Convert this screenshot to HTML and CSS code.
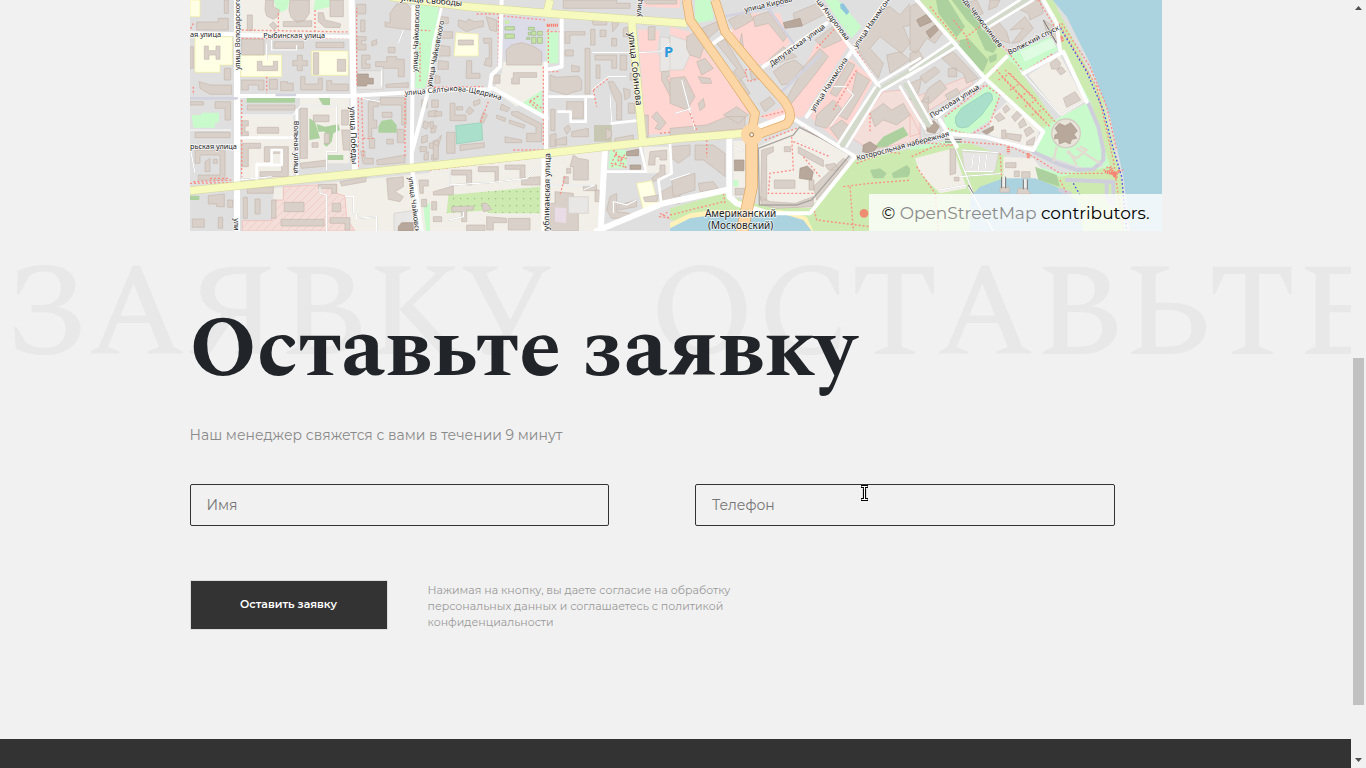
FILE: index.html
```html
<!DOCTYPE html>
<html lang="ru">
<head>
<meta charset="utf-8">
<meta name="viewport" content="width=device-width, initial-scale=1">
<title>Оставьте заявку</title>
<link rel="stylesheet" href="styles.css">
</head>
<body class="page">
<div class="page__content">
  <section class="map container" aria-label="Карта">
    <svg class="map__canvas" viewBox="0 0 2916 693" preserveAspectRatio="xMidYMid slice" role="img" aria-label="Карта района">
      <defs>
        <pattern id="hatch" width="24" height="24" patternUnits="userSpaceOnUse"><path d="M0 24L24 0" stroke="#efc6c0" stroke-width="2"/></pattern>
        <pattern id="dots" width="21" height="21" patternUnits="userSpaceOnUse"><circle cx="8" cy="8" r="2" fill="#8db87c"/></pattern>
        <path id="saltykova" d="M645 286L790 273Q860 274 960 310"/>
      </defs>
      <rect class="m-res" width="2916" height="693"/>

      <!-- west: land -->
      <g>
        <path class="m-land" d="M150 0H478V100H150zM155 345H310V520H155zM155 415H310V535H155zM330 293H478V490H330zM250 565L750 515V693H250z"/>
        <path class="m-school" d="M0 0H30V50H0zM15 110H127V195H90V217H15zM152 165H275V230H152zM365 153H474V226H365z"/>
        <path class="m-park" d="M250 0H300L290 30L265 38zM375 0H420V20L370 32zM690 15H745V100L705 265H675zM700 620L725 605V693H708zM5 345H35V338H87V368H75V383H10z"/>
        <path class="m-wood" d="M170 293H315V308H170zM385 293H420V318H400zM358 355L375 365L390 415L358 420zM380 372L405 380L445 372L450 390L430 400L425 425L410 440L400 432L415 420L405 395H385zM412 465H460V480H412zM575 362L605 358L620 375V398H565V380zM280 562H345V590H280zM0 587H28V600H0z"/>
        <path class="m-hosp" d="M280 560L440 552V580L465 588L470 655L495 693H157V662H245L250 600H280z"/>
        <path fill="url(#hatch)" d="M280 560L440 552V580L465 588L470 655L495 693H157V662H245L250 600H280z"/>
        <path class="m-ind" d="M502 212H580V268H502zM612 640L680 630L690 693H612z"/>
        <path class="m-b" d="M20 66H85V55H115V90H20zM103 0H115V40H103zM172 45H187V92H172zM238 75L250 65L263 80L252 90zM227 0H250V20L268 30L265 48L250 58L230 48L225 30zM300 0H358V40L345 60L322 68L303 52L297 30zM280 65L365 62V80H280zM385 38H400L405 60L440 68L452 72L450 83L405 82L385 65zM420 0H460V50H420zM155 118H222V165H155zM252 125H340V145H252zM378 127H462V143H378zM43 138H55V152H78V138H90V178H78V165H57V178H43zM0 140H10V205H0zM202 184H216V198H250V184H263V212H202zM322 166H337V182H352V197H337V212H322V197H308V182H322zM370 158H386V223H370zM442 178H467V214H442zM103 205H122V240H103zM28 245L60 255H125V283H60L30 265zM155 240H222V270H205V255H175V270H155zM238 238H262V268H238zM272 245H292V250H310V272H272zM332 230H345V252H385V235H397V270H332zM410 242H425V252H475V272H410zM500 13H527V42H500zM512 60H525V95H512zM500 110H528V122H515V133H528V150H500zM515 165H540V178H528V192H540V205H515zM545 125L560 118V133L545 138zM557 185H590V170H620V178H643V230H625V205H580V200H557zM595 142H615V158H595zM585 65L600 70V40L620 12L650 10L665 30V90L585 80zM588 253L655 248V262H588zM0 305H40V315H0zM75 305H122V360H105V325H75zM172 315H315V330H172zM155 362H175V378H165V395H175V408H155zM202 382H266V400H202zM15 397H120V413H15zM330 325H352V475H330zM370 345H417V365H370zM455 330H475V375H455zM455 390H480V450H460zM403 400H418V430H403zM366 428H384V442H366zM535 305H565V320H550V360H560V385H545V410H535zM570 293H648V375H635V315H570zM577 337H606V352H577zM622 388H642V428H622zM538 415H554V445H538zM590 418H610V432H590zM155 430H212V445H175V500H155zM223 440H295V530H210V515H275V460H240V485H223zM330 490L410 480V498L335 505zM512 453H525V475H550V492H520zM560 480L645 465V488L562 495zM15 450H105V540H25V525H90V465H30V490H15zM45 485L60 475V515H45zM70 478H82V490H70zM695 300H712V322H695zM725 300H745V322H725zM715 335L740 330V350H715zM702 363L718 368L710 388L698 382zM725 375L740 378L735 398H722zM695 410L712 405V425L695 430zM690 440H710V455H690zM718 430L740 425V445H718zM702 462L715 455V480H702zM725 465H740V480H725zM55 587L103 582V620H80V612H55zM113 600H128V622H113zM172 565L250 560V580H172zM160 592H172V655H160zM195 597H210V642H195zM245 600H258V655H245zM283 607H342V635H283zM427 610H452V635H427zM273 658H402V678H273zM420 653H480V690H465V670H420zM385 553H440V580H425V565H385zM450 545L528 530V545L455 558zM590 535L640 530V560L615 575L640 590L630 605L595 598zM687 540H715V558H700V580H690zM735 530H750V580H722V568H735zM7 657H43V682H7zM85 652H98V685H85zM695 598H710V620H695z"/>
        <path class="m-bd" d="M502 222H535V235H550V252H530V258H502zM635 668H670V693H625V680z"/>
        <path class="m-minor" d="M245 120V150H320V135M230 130V180M150 345H310L330 318H440V455H410V510M390 560V580L410 585V693M500 640V655L560 650V693M465 590H490V640M515 295L570 305M575 210V260M625 130L640 90M0 390H125M150 540L245 530M0 440L15 520"/>
        <path class="m-foot" d="M155 90L480 96M155 115H475M10 70L0 90M230 230V280M265 40V95M375 30V95M515 295L520 470M520 415H555M155 300V530M10 545L130 540M0 550L125 548M505 290V500M645 270V470M500 255V25M10 260V285M680 90L720 92M690 130V250M60 535H120M160 548L640 500"/>
      </g>

      <!-- centre west: land -->
      <g transform="translate(720)">
        <path class="m-park" d="M0 10H25L15 130L0 200zM350 95H385V190H350zM268 270L335 268V340L262 310z"/>
        <path class="m-inst" d="M220 50H345V190H232L220 160z"/>
        <path class="m-land" d="M220 185H345V265L260 320L190 270L215 220zM0 505L335 465V693H0zM350 460L515 450V693H350zM640 440H725V520H650z"/>
        <path class="m-green" d="M55 585L330 560V640H185L155 632L50 640zM224 60H238V72H224z"/>
        <path fill="url(#dots)" d="M55 585L330 560V640H185L155 632L50 640z"/>
        <path class="m-school" d="M78 98L145 102V168H72zM620 550L665 542L685 615L640 630z"/>
        <path class="m-retail" d="M625 88L690 92L680 160L750 215V395L645 405zM640 0H750V25L640 20z"/>
        <path class="m-ind" d="M690 110L750 120V215L690 215z"/>
        <path class="m-pitch" d="M77 377L155 368L158 420L80 432z"/>
        <path class="m-olive" d="M492 375H545V425H492z"/>
        <path class="m-park" d="M540 450H590V505H535z"/>
        <path class="m-lawn" d="M225 80H253V90H225zM225 102H253V115H225zM295 82H313V90H295zM295 97H302V105H295zM305 94H318V106H305zM323 94H337V106H323zM290 112H300V118H290zM305 112H318V130H305zM322 112H337V130H322z"/>
        <path class="m-b" d="M30 50L55 52V70L30 72zM45 95H68V115H30L35 92zM25 135L60 140V168H22zM25 182L55 185V208H25zM15 225L30 230V250H15zM85 60L110 65L115 57L135 65L160 62V80L135 85L110 95L85 80zM168 50L200 60V95L180 90zM160 115H185V200L162 195L168 175H178V130H162zM85 120H130V135H85zM110 182H125V220H150V235H108zM228 150L245 135L275 128L310 138L335 155V195H230zM250 218H320V232H268V252H245V235H250zM60 310H75V345H108V362H60zM15 335H35V348H15zM0 365H10V385H0zM80 320H98V330H80zM118 320L132 332L118 345L108 335zM130 305L150 298V310L132 318zM160 335L172 345L160 370L150 362zM215 312L240 325L232 335L210 328zM200 345L228 355L225 365L200 355zM238 360L285 375L282 385L238 370zM245 335L265 335L335 372V425H290V400H318V380L245 345zM225 410L275 420V428H225zM10 430L35 405L25 440zM50 397H75V460H50zM90 435L163 428V442L90 452zM10 422H25V478L10 475zM195 225H210V250H180zM360 225L380 232L445 228L455 240V270L425 278L410 285L360 270zM425 195L448 200V215H425zM465 145H480V282H465zM405 95H465V105H420V130H405zM405 150H430V168H405zM485 60H530V75H490zM482 88H495V135H482zM510 90H528V110H510zM545 55H565V75L548 95zM545 115H560V138H545zM495 165H560V205H545V180H495zM498 195H510V235H498zM535 245H550L575 285V360H560V310L540 265zM580 85L595 80V110H580zM410 305H460V355H425V335H410zM362 328H375V392H362zM402 385L415 375L422 388L410 403zM360 405L378 400V440H360zM375 420L410 410V435H375zM425 395L475 385V410H425zM528 385L545 395V410L528 420zM555 415L610 405V425H555zM635 345H655V410H640zM570 165H590V210H570zM600 220H620V240H600zM580 265L600 270V290L585 300zM595 310H615V340H595zM665 350L680 335L708 368L690 390L675 385L685 370zM695 215L740 210V230H710L750 320V345L695 240zM655 80H675V120H655zM720 110H750V135H720zM10 575L70 558V585H10zM65 510H125V555H110V525H65zM145 500H205V545H195V515H145zM225 495H285V535H270V508H225zM275 535L330 530V555H275zM5 605H20V630H5zM65 620L130 618V630H110V665H95V635H65zM155 610H170L185 628L160 635zM170 650L230 655V668H190V690H170zM235 655H300V690H235zM110 675H165V693H110zM430 465L445 475L475 480V540H430V500H420zM410 505H422V520H410zM400 530H415V552H400zM375 575L430 580V630L445 640V693H360V610H375zM495 570H508V605H495zM460 555H500V572H460zM590 455L625 448V465H590zM660 455L710 450V480H690V470H675V495H655zM540 590L560 580V635L600 640V655H545L530 630zM565 615L620 600V620L565 630zM640 592L685 585L680 605H645zM695 575L750 545V610L700 615zM665 535L690 515V495H705V530L670 545zM10 650H35V665H10zM345 560L360 550V600L345 640zM400 0V25H600V10H560V0zM640 0L740 0V12H650z"/>
        <path class="m-bd" d="M590 455L625 448V467H590zM600 495H632V508H600z"/>
        <path class="m-pink" d="M375 622L410 625L408 670L375 665z"/>
        <path class="m-ind" d="M415 590H475V640H415z"/>
        <path class="m-minor" d="M60 510V555L180 548L290 535L330 495M55 660L100 650V635M485 158H620L690 155L720 130M590 230H535L485 270M540 285L545 365M460 570L495 555H340M550 640V605L590 615L620 600M620 220V200"/>
        <path class="m-foot" d="M0 262L160 260M140 42H210M205 50V215M220 48L345 60M355 75V190M350 95H400M340 200V440M250 450H340M490 270L535 235M490 270L500 320M175 305L150 370M300 305L330 285M298 305L325 330M300 300L335 325M405 530L390 585M0 510L340 470M690 400L740 395M550 450L590 505M545 500L590 460M560 455L545 490L580 500L565 480L590 475L555 465M355 215H385M530 685L740 600M690 640L720 655L690 650L715 635"/>
        <path class="m-red" d="M350 76H385"/>
      </g>

      <!-- centre east: land -->
      <g transform="translate(1440)">
        <path class="m-retail" d="M0 80L60 95L240 330L210 395L0 410zM180 90L250 40H330L360 130L290 195L240 190zM270 350L340 320L440 130L500 95L540 130L400 350L300 360zM420 350L540 175L610 240L510 430z"/>
        <path class="m-land" d="M190 422H225V590H190zM265 440L385 380L540 465L425 625H265z"/>
        <path class="m-hosp" d="M540 410L640 275L700 270L750 350V420L600 450z"/>
        <path class="m-ind" d="M0 105L60 125V165L40 210H0z"/>
        <path class="m-park" d="M75 0H120L130 60L75 70zM465 0H505L575 80L545 115L500 55zM190 540H205V560H190z"/>
        <path class="m-green" d="M0 625L160 580L240 610L420 625L555 480L750 440V693H420L0 660z"/>
        <path class="m-wood" d="M600 510L630 505L650 520L640 535H610zM665 520L710 495L725 510L715 530L670 535zM640 410L700 380L715 405L650 440L610 445z"/>
        <path class="m-beach" d="M0 668L60 640L130 630H330L410 650L430 693H0z"/>
        <path class="m-water" d="M0 685L60 655L130 645H250L350 645L400 660L425 693H0z"/>
        <path class="m-b" d="M50 110L80 95L105 130L90 175L60 165L50 145zM95 85L140 65L150 85L115 115zM140 130L165 118L230 225L210 240L190 215L200 205zM0 235L45 230L75 290L50 330L0 310zM80 185L105 175L130 205L95 225zM85 230L120 235L125 250H95zM85 310L100 295L105 320L90 332zM190 250L215 240L240 280L225 290zM0 385L110 375L170 350L225 350V385L0 408zM160 345L200 320L235 345L205 370zM240 215L265 210L280 230L245 240zM175 60L235 30L250 60L195 90zM215 100L225 180L205 150zM250 50L295 35L350 110L340 125L295 70L255 80zM310 215L345 190L375 180L400 200L360 250L335 255zM340 140L380 170L320 190L290 185zM370 40L455 5L480 35L400 75L375 70zM270 310L300 290L315 310L285 335zM405 195L450 145L475 170L430 230L365 310L345 305zM435 120L495 75L515 120L460 145zM535 185L555 195L530 240L500 290L480 280zM560 215L600 240L560 310L530 360L505 345L545 285zM440 345L490 300L515 325L470 385L435 375zM480 385L515 360L540 380L510 425zM560 130L600 90L625 30L660 20L690 45L720 10L750 30V70L700 80L720 130L695 160L630 110L600 145L640 190L625 235L570 160zM650 165L690 155L720 180L660 220zM600 340L640 310L665 330L700 310L720 345L680 375L640 360L615 380zM0 440L60 435V465L25 490L0 470zM75 435H130L165 460V530L140 510L100 480H75zM5 540L75 520V570L10 590zM85 550L130 545L145 565L90 575zM275 450L310 440V455L290 465V600H272zM313 540H375V565H313zM385 440L460 480V500L385 460zM343 440H362V455H343zM270 590L300 605L375 610L430 590V620L320 625L275 615zM430 560L520 475L535 485L440 600zM465 495L495 490L505 510H475zM195 565H225V585H195zM417 540H432V570H417z"/>
        <path class="m-bd" d="M340 68L390 55L397 78L345 85zM193 480H222V512H193zM390 505L412 498L430 515L425 540L388 535zM580 435L600 425L622 440L605 462L578 455zM740 60L750 55V80H740z"/>
        <path class="m-pool" d="M510 12L520 10L538 35L530 45L512 25z"/>
        <path class="m-fort" d="M265 445L370 405L388 382L455 415L540 465L425 600L380 615H268z"/>
        <path class="m-minor" d="M35 240L75 390M15 340L65 325M380 425L480 470M490 260H525L550 285L480 380M0 540L60 520M190 440L220 455"/>
        <path class="m-foot" d="M225 210L265 205L270 235L235 245L225 215M365 410L370 510L300 520L295 580H430M370 425L480 470M400 470L450 530M160 580L165 610M0 645L160 605M440 145L500 80M490 330L560 210M555 145L620 245M275 350L340 335M60 340L80 390M400 380L500 440M520 560L600 550L730 540L730 470M540 560L550 693M430 620L440 660L600 680M560 490L650 455L690 460M600 340V400M480 60L540 130M110 420V470M285 420L380 385"/>
      </g>

      <!-- east: land -->
      <g transform="translate(2160)">
        <path class="m-park" d="M0 440L130 420L450 520L580 500L540 310L450 150L400 0H430L620 520L650 693H0z"/>
        <path class="m-green" d="M30 0H150L300 170L440 370L400 385L220 235zM400 0H430L500 140L580 300L640 560V693H0V450L180 430L450 530L600 500L545 310L450 145z"/>
        <path class="m-park" d="M285 170L420 110L445 150L340 215zM100 350L180 300L240 250L270 290L240 360L180 400L110 395zM400 385L450 350L530 310L580 430L575 490L540 510L375 455z"/>
        <path class="m-pale" d="M330 155L425 115L438 140L345 185z"/>
        <path class="m-land" d="M355 225L450 165L525 305L455 350zM240 355L290 305L390 385L370 445L240 405zM15 475L130 445L170 565L90 580L30 520zM280 470L370 475L420 540L280 560z"/>
        <path class="m-res" d="M0 0L130 120L0 215zM130 0H400L440 90L290 155zM0 255L140 150L215 235L60 345z"/>
        <path class="m-hosp" d="M20 290L170 230L190 250L60 330zM0 340L30 400L0 410z"/>
        <path class="m-ind" d="M155 455L265 460L255 515H165z"/>
        <path class="m-wood" d="M78 0H115L165 80L140 112L85 40zM125 0H155L225 70L210 100L170 60zM150 120L175 115L235 180L220 215L190 205L145 145zM200 95L225 90L262 140L250 160L225 150zM235 170L260 160V180L240 190zM375 500L440 525L450 560L385 540z"/>
        <path class="m-b" d="M0 20L20 10L100 95L75 130L50 115L20 160L0 150zM0 160L25 150L40 175L0 200zM165 10L200 0L220 40L200 50zM240 0H270L260 20L235 30zM235 85L265 65L290 95L300 130L270 120zM300 90L345 50L370 85L330 125L305 130L340 85zM320 25L365 0H390L400 40L360 60L355 40zM400 60L450 90L440 125L410 100zM95 175L130 155L205 235L170 250L160 220L130 205zM30 230L75 200L90 215L45 250zM0 250L35 235L25 280L0 300zM55 265L90 240L110 265L60 310L35 305zM115 205H140V230H115zM105 285L140 265L150 280L115 300zM30 310L55 290V335L40 345zM420 190L440 175L452 190L447 207H425zM440 210L455 200L467 215L452 225zM460 295L495 275L512 300L470 322zM253 350L270 338L285 355L265 365zM278 325L290 315L300 328L285 340zM305 350L325 330L335 345L315 365zM325 370L340 355L350 375L330 385zM342 390L360 380L372 395L350 410zM290 400L335 405L330 425L290 415zM350 425L375 410L370 435H350zM275 390H288V415H275zM120 447H137V520L120 525zM133 532H147V543H133zM287 488H318V503H287zM335 515H360V535H335zM313 513H328V530H313z"/>
        <path class="m-ind" d="M35 365L80 358L92 398L45 405z"/>
        <path class="m-bd" d="M20 60L50 43L65 65L30 80zM48 95L75 75L85 90L60 115zM48 370L72 362L88 380L75 400L52 395zM217 395L250 378V390L230 403z"/>
        <path class="m-water" d="M428 0H758V693H660L640 530L600 350L540 190L470 50zM180 590L210 560L280 535H375L440 560L500 600L520 693H180z"/>
        <path class="m-pitch" d="M137 350L155 325L225 280Q250 270 247 300L215 345L175 380Q130 395 137 350z"/>
        <path class="m-road m-gray" d="M535 310L565 380L580 450V480L550 508L500 510L440 490L370 455M470 540L610 545V610M590 550V590L610 620M450 570L480 580"/>
        <circle class="m-ring" cx="468" cy="400" r="43"/>
        <path class="m-ringpath" d="M440 440L430 485M475 450L500 495M500 445L570 490M470 455L500 475L530 450L510 440"/>
        <path class="m-bd" d="M435 385L448 370L465 378L482 368L494 382L502 393L492 403L500 415L485 418L480 432L465 425L448 432L446 415L433 416L435 405L445 400z"/>
        <path class="m-minor" d="M330 210L450 345L530 300M155 450L265 458M165 515H250M150 530L280 520M175 560L250 693M135 440L190 580M190 465L185 505M210 465L205 510M230 465L225 510M90 570L170 555"/>
        <path class="m-walk" d="M281 530V565M346 538V568"/>
        <path class="m-b" d="M270 562H298V577H270zM325 565H350L362 582H320z"/>
        <path class="m-pier" d="M275 530V565M287 530V565M340 538V568M352 538V568M105 418H155M105 426H155M175 555L190 580M400 60L440 130"/>
        <path class="m-foot" d="M130 60L170 110L210 80M60 20L150 130M170 115L180 145M250 200L420 380M275 230L400 360M300 220L440 370M285 210L380 300M265 240L300 220M300 270L330 250M320 295L355 275M345 320L380 300M365 345L405 325M105 350L225 255L270 285L240 370L180 405L110 385M130 435L0 425M150 425L290 435L370 470L450 520L580 520M270 460L275 530M5 470L70 440L130 435M440 60L560 260L610 480L640 693M455 70L540 200L590 320L620 450M580 510L625 520M590 500L615 530M600 520L640 510M20 500L75 580L85 693M230 85L290 150L340 215M350 210L430 160M450 540L470 580M385 0L440 90"/>
        <path class="m-cycle" d="M445 75L530 215L580 330L605 430L635 530L650 693M490 550L510 585"/>
        <path class="m-red" d="M450 110L460 125M445 120L460 110M295 440V460M355 460V475M585 515L620 525M600 500L620 535M610 530L630 510"/>
      </g>

      <!-- minor streets -->
      <g class="m-road">
        <path class="w18" d="M141 0V693M485 0L495 525M1245 445L1232 693"/>
        <path class="w12" d="M155 105L480 110M0 100L135 103M150 288H480L760 271L900 268M670 20L665 500L675 560L695 693M715 270L665 460M1068 190V460M1115 40V200L1068 210M935 0L930 200L905 225L900 260L1070 355M1060 460V693"/>
        <path class="w8" d="M755 20L730 130L715 270M150 413H310M320 330L322 530M200 540V492H245V450H275V495H205M1072 290H1210M1187 290V365H1142V335H1105M1265 370L1340 362M1350 435L1368 515L1250 515M1440 430L1445 520L1405 540L1415 615"/>
        <path class="w18" d="M1220 693L1420 610L1610 570M1618 410V590L1640 610L1730 640M1700 385L1790 350"/>
        <path class="w12" d="M1730 640H1860L1995 470L1800 350M1570 130L1620 95M1720 200L1910 70M1850 350L2090 0M1880 0L2067 260"/>
        <path class="m-median" d="M2062 268L1958 435M2080 262L2300 130M2148 255L2215 375M2380 80L2510 0"/>
        <path class="w8" d="M2055 262L1945 430M2072 275L1970 440M2067 248L2190 175M2075 272L2190 205M2130 260L2205 385M2155 245L2225 370"/>
        <path class="w12" d="M2180 0L2385 235L2560 395L2530 450L2380 410L2260 400M2250 360L2300 440M2385 235L2450 170M2500 220L2620 155L2690 305M2560 0L2600 70L2610 150M2240 350L2385 235"/>
        <path class="w8" d="M2160 210L2285 125M2150 232L2300 140M2380 70L2490 0M2390 85L2530 0"/>
        <path class="m-lav w8" d="M0 295H140M260 285H315M1770 280L1890 165M1600 50L1780 15M1735 25L1810 130"/>
      </g>
      <!-- main roads -->
      <g class="m-main">
        <path class="m-case" d="M0 572L750 495L1470 415L1660 400M600 -10L830 20L1075 40L1490 70M1080 0L1070 40M1325 65L1358 425"/>
        <path d="M0 572L750 495L1470 415L1660 400M600 -10L830 20L1075 40L1490 70M1080 0L1070 40M1325 65L1358 425"/>
      </g>
      <path class="m-park" d="M1515 0H1560L1572 50L1520 60z"/>
      <g class="m-trunk">
        <path class="m-case" d="M1490 0L1500 60L1620 230L1695 340L1685 400M1575 0L1605 95L1700 210L1780 300Q1815 345 1790 372L1685 410"/>
        <path class="m-case wide" d="M1685 400V560L1655 700"/>
        <circle cx="1685" cy="404" r="32"/>
        <path d="M1490 0L1500 60L1620 230L1695 340L1685 400M1575 0L1605 95L1700 210L1780 300Q1815 345 1790 372L1685 410"/>
        <path class="wide" d="M1685 400V560L1655 700"/>
        <circle class="m-dot" cx="1685" cy="404" r="6"/>
      </g>

      <!-- labels -->
      <g class="m-label">
        <text x="0" y="110">ая улица</text>
        <text x="220" y="114">Рыбинская улица</text>
        <text x="0" y="448">рьская улица</text>
        <text transform="translate(150 210) rotate(-90)">улица Володарского</text>
        <text transform="translate(132 655) rotate(90)">улица</text>
        <text transform="translate(312 362) rotate(90)">Вольная улица</text>
        <text class="m-big" transform="translate(479 320) rotate(88)">улица Победы</text>
        <text transform="translate(682 216) rotate(-88)">улица Чайковского</text>
        <text transform="translate(724 262) rotate(-79)">улица Чайковского</text>
        <text transform="translate(655 532) rotate(83)">улица Чайковского</text>
        <text><textPath href="#saltykova">улица Салтыкова-Щедрина</textPath></text>
        <text class="m-big" transform="translate(630 2) rotate(5)">улица Свободы</text>
        <text class="m-big" transform="translate(1077 705) rotate(-89)">публиканская улица</text>
        <text class="m-main-label" transform="translate(1315 98) rotate(84)">улица Собинова</text>
        <text transform="translate(1352 50) rotate(-85)">улица</text>
        <text transform="translate(1665 37) rotate(-13)">улица Кирова</text>
        <text transform="translate(1745 200) rotate(-36)">Депутатская улица</text>
        <text transform="translate(1870 -8) rotate(53)">ица Андропова</text>
        <text transform="translate(1872 336) rotate(-57)">улица Нахимсона</text>
        <text transform="translate(2000 145) rotate(-55)">улица Нахимсона</text>
        <text transform="translate(2002 482) rotate(-15)">Которосльная набережная</text>
        <text transform="translate(2225 355) rotate(-32)">Почтовая улица</text>
        <text transform="translate(2300 -20) rotate(52)">щадь Челюскинцев</text>
        <text transform="translate(2458 165) rotate(-27)">Волжский спуск</text>
        <text class="m-place" x="1652" y="652" text-anchor="middle">Американский</text>
        <text class="m-place" x="1652" y="688" text-anchor="middle">(Московский)</text>
      </g>
      <text class="m-parking" x="1422" y="172">P</text>
      <circle class="m-marker" cx="2022" cy="640" r="13"/>
    </svg>
    <p class="map__credit">© <a class="map__link" href="#">OpenStreetMap</a> contributors.</p>
  </section>

  <section class="request">
    <div class="request__backdrop" aria-hidden="true"><span>ЗАЯВКУ</span><span>ОСТАВЬТЕ</span></div>
    <div class="container request__inner">
      <h2 class="request__title">Оставьте заявку</h2>
      <p class="request__lead">Наш менеджер свяжется с вами в течении 9 минут</p>
      <form class="form">
        <div class="form__fields">
          <input class="form__input" type="text" name="name" placeholder="Имя" aria-label="Имя">
          <div class="form__cell">
            <input class="form__input" type="tel" name="phone" placeholder="Телефон" aria-label="Телефон">
            <svg class="cursor" viewBox="0 0 9 18" aria-hidden="true"><path d="M1 2.500H3.500L4.500 3.500L5.500 2.500H8M4.500 3.500V14.500M1 15.500H3.500L4.500 14.500L5.500 15.500H8" fill="none" stroke="#000" stroke-width="3.200"/><path d="M1.500 2.500H7.500M4.500 2.500V15.500M1.500 15.500H7.500" stroke="#fff"/></svg>
          </div>
        </div>
        <div class="form__footer">
          <button class="form__submit" type="submit">Оставить заявку</button>
          <p class="form__note">Нажимая на кнопку, вы даете согласие на обработку персональных данных и соглашаетесь с политикой конфиденциальности</p>
        </div>
      </form>
    </div>
  </section>
  <footer class="footer"></footer>
</div>
<div class="scrollbar" aria-hidden="true">
  <svg class="scrollbar__arrow" viewBox="0 0 15 16"><path d="M4 10L7.500 6L11 10z" fill="#505050"/></svg>
  <div class="scrollbar__track"><div class="scrollbar__thumb"></div></div>
  <svg class="scrollbar__arrow" viewBox="0 0 15 16"><path d="M4 6L7.500 10L11 6z" fill="#505050"/></svg>
</div>
</body>
</html>
```
FILE: styles.css
```css
* { box-sizing: border-box; }

.page {
  display: flex;
  height: 100vh;
  margin: 0;
  overflow: hidden;
  background: #f1f1f1;
  color: #212529;
  font-family: Montserrat, Inter, "Noto Sans", sans-serif;
}

.page__content {
  display: flex;
  flex: 1;
  flex-direction: column;
  min-width: 0;
  overflow: hidden;
}

.container {
  width: 72%;
  max-width: 972px;
  margin: 0 auto;
}

/* Map */
.map { position: relative; flex: none; }
.map__canvas { display: block; width: 100%; height: 231px; }
.map__credit {
  position: absolute;
  right: 0;
  bottom: 0;
  margin: 0;
  padding: 7px 12px 6px;
  background: rgba(255, 255, 255, .8);
  color: #000;
  font-size: 17px;
  line-height: 24px;
}
.map__link { color: #8a8a8a; text-decoration: none; }

.m-res { fill: #dfdfdf; }
.m-land { fill: #f2efe9; }
.m-school { fill: #ffffe5; stroke: #f3eda0; stroke-width: 2; }
.m-park { fill: #c8facc; }
.m-pale { fill: #dffce2; }
.m-green { fill: #cdebb0; }
.m-lawn { fill: #c5e3a5; stroke: #9cb784; stroke-width: 2; }
.m-wood { fill: #add19e; }
.m-olive { fill: #c7c7b4; }
.m-hosp { fill: #f4ded9; stroke: #f3b7b0; stroke-width: 2; }
.m-retail { fill: #ffd6d1; }
.m-ind { fill: #e9e7e5; stroke: #d2cec9; stroke-width: 2; }
.m-inst { fill: #dcdce8; }
.m-pink { fill: #eadce6; }
.m-beach { fill: #fff1ba; }
.m-water { fill: #aad3df; }
.m-pool { fill: #8fc5dd; }
.m-pitch { fill: #aae0cb; stroke: #8ecdb4; stroke-width: 2; }
.m-b { fill: #d9d0c9; stroke: #c5b8ad; stroke-width: 2; }
.m-bd { fill: #b8a89c; stroke: #a69485; stroke-width: 2; }
.m-fort { fill: none; stroke: #a9a5a0; stroke-width: 4; }
.m-minor { fill: none; stroke: #fff; stroke-width: 4; filter: drop-shadow(0 0 1px #aaa); }
.m-foot { fill: none; stroke: #fa8f84; stroke-width: 4; stroke-dasharray: 6 6; }
.m-cycle { fill: none; stroke: #4747f0; stroke-width: 4; stroke-dasharray: 5 7; }
.m-red { fill: none; stroke: #fa8072; stroke-width: 9; stroke-dasharray: 4 2; }
.m-ring { fill: #e8e4d9; stroke: #d5ccc3; stroke-width: 4; }
.m-ringpath { fill: none; stroke: #e2dcd0; stroke-width: 7; }
.m-walk { stroke: #eee; stroke-width: 12; }
.m-pier { fill: none; stroke: #77736f; stroke-width: 3; }
.m-road { fill: none; stroke: #fff; stroke-linejoin: round; stroke-linecap: round; }
.m-median { stroke: #d3dacb; stroke-width: 16; }
.m-gray { stroke: #cfcfdb; stroke-width: 12; }
.m-lav { stroke: #d3d3e0; }
.w18 { stroke-width: 18; }
.w12 { stroke-width: 12; }
.w8 { stroke-width: 8; }
.m-main path { fill: none; stroke: #f7fabf; stroke-width: 22; }
.m-main .m-case { stroke: #d5d89a; stroke-width: 25; }
.m-trunk path { fill: none; stroke: #fcd6a4; stroke-width: 24; }
.m-trunk .m-case { stroke: #dfa863; stroke-width: 28; }
.m-trunk .wide { stroke-width: 33; }
.m-trunk .m-case.wide { stroke-width: 37; }
.m-trunk circle { fill: #fcd6a4; }
.m-trunk .m-dot { fill: #f2efe9; stroke: #a57f4d; stroke-width: 3; }
.m-label {
  fill: #222;
  stroke: #fff;
  stroke-width: 4;
  stroke-opacity: .8;
  paint-order: stroke;
  font-family: "Noto Sans", sans-serif;
  font-size: 22px;
}
.m-big { font-size: 25px; }
.m-main-label { font-size: 28px; }
.m-place { font-size: 30px; }
.m-parking { fill: #2a9bdc; font: bold 44px "Noto Sans", sans-serif; }
.m-marker { fill: #ef8d72; }

/* Request form */
.request {
  position: relative;
  flex: none;
  height: 508px;
}
.request__backdrop {
  position: absolute;
  top: 8px;
  left: 3px;
  display: flex;
  gap: 96px;
  color: #e8e8e8;
  font-family: Spectral, "Liberation Serif", serif;
  font-size: 132px;
  font-weight: 500;
  line-height: 152px;
  white-space: nowrap;
}
.request__inner { position: relative; padding-top: 63px; }
.request__title {
  margin: 0;
  font-family: Spectral, "Liberation Serif", serif;
  font-size: 85px;
  font-weight: 700;
  line-height: 112px;
}
.request__lead {
  margin: 17px 0 0;
  color: #8a8a8a;
  font-size: 14px;
  font-weight: 400;
  line-height: 24px;
}
.form { margin-top: 37px; }
.form__fields {
  display: grid;
  grid-template-columns: 1fr 1fr;
  gap: 86px;
  padding-right: 47px;
}
.form__cell { position: relative; }
.form__input {
  display: block;
  width: 100%;
  height: 42px;
  padding: 0 16px;
  border: 1px solid #333;
  border-radius: 2px;
  background: transparent;
  color: #212529;
  font: 400 14px Montserrat, Inter, sans-serif;
}
.form__input::placeholder { color: #757575; opacity: 1; }
.cursor {
  position: absolute;
  top: 0;
  left: 165px;
  width: 9px;
  height: 18px;
}
.form__footer {
  display: flex;
  align-items: flex-start;
  gap: 40px;
  margin-top: 54px;
}
.form__submit {
  width: 198px;
  height: 50px;
  padding: 0 0 2px;
  border: 1px solid #ddd;
  background: #333;
  color: #fff;
  font: 600 11px Montserrat, Inter, sans-serif;
}
.form__note {
  max-width: 304px;
  margin: 2px 0 0;
  color: #999;
  font-size: 11px;
  line-height: 16px;
}
.footer { flex: 1 0 auto; background: #333; }

/* Window scrollbar */
.scrollbar {
  display: flex;
  flex: none;
  flex-direction: column;
  width: 15px;
  background: #f1f1f1;
}
.scrollbar__arrow { width: 15px; height: 16px; }
.scrollbar__track {
  display: flex;
  flex: 1;
  flex-direction: column;
  justify-content: flex-end;
  padding: 0 2px 47px;
}
.scrollbar__thumb { height: 347px; background: #c1c1c1; }
```
